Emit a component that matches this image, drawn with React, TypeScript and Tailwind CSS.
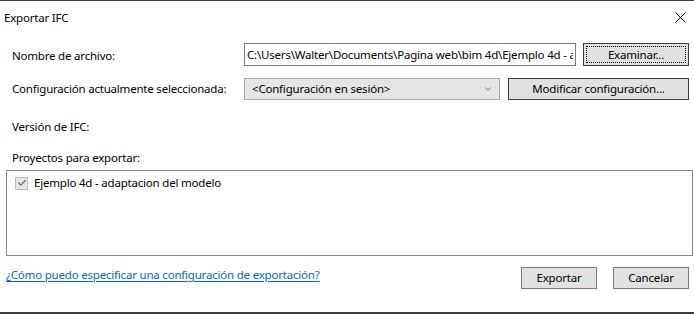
import { Check, ChevronDown } from 'lucide-react';

function WinButton({ label, width, focused = false, darkBorder = false }: { label: string; width: string; focused?: boolean; darkBorder?: boolean }) {
  return (
    <button
      className={`${width} h-full flex items-center justify-center bg-[#e1e1e1] border ${
        darkBorder ? 'border-[#3c3c3c]' : 'border-[#7a7a7a]'
      } text-black p-[2px]`}
    >
      <span
        className={`w-full h-full flex items-center justify-center ${
          focused ? 'border border-dotted border-black' : ''
        }`}
      >
        {label}
      </span>
    </button>
  );
}

export default function App() {
  return (
    <div
      className="w-[694px] h-[314px] bg-white border-t border-b-2 border-[#3f3f3f] text-black text-[11.5px] tracking-[-0.2px] flex flex-col overflow-hidden"
      style={{ fontFamily: '"Noto Sans", "Open Sans", sans-serif' }}
    >
      {/* Title bar */}
      <div className="h-[33px] flex items-center justify-between pl-[4px] pr-[8px] shrink-0">
        <span>Exportar IFC</span>
        <svg width="11" height="11" viewBox="0 0 11 11" className="text-black">
          <path d="M0.5 0.5 L10.5 10.5 M10.5 0.5 L0.5 10.5" stroke="currentColor" strokeWidth="1" fill="none" />
        </svg>
      </div>

      {/* File name */}
      <div className="mt-[9px] h-[23px] flex items-center pl-[12px] shrink-0">
        <span className="w-[232px] pt-[3px]">Nombre de archivo:</span>
        <div className="w-[332px] h-full border border-[#7a7a7a] flex items-center pl-[2px] overflow-hidden whitespace-nowrap">
          <span className="w-[326px] overflow-hidden">C:\Users\Walter\Documents\Pagina web\bim 4d\Ejemplo 4d - a</span>
        </div>
        <div className="ml-[7px] h-full">
          <WinButton label="Examinar..." width="w-[106px]" focused darkBorder />
        </div>
      </div>

      {/* Configuration */}
      <div className="mt-[12px] h-[22px] flex items-center pl-[12px] shrink-0">
        <span className="w-[232px]">Configuración actualmente seleccionada:</span>
        <div className="w-[256px] h-full border border-[#acacac] bg-[#e5e5e5] flex items-center justify-between pl-[7px] pr-[6px]">
          <span>&lt;Configuración en sesión&gt;</span>
          <ChevronDown className="w-[10px] h-[10px] text-[#555]" strokeWidth={2} />
        </div>
        <div className="ml-[8px] h-full">
          <WinButton label="Modificar configuración..." width="w-[181px]" darkBorder />
        </div>
      </div>

      {/* IFC version */}
      <div className="mt-[16px] h-[22px] flex items-center pl-[12px] shrink-0">
        <span>Versión de IFC:</span>
      </div>

      {/* Projects */}
      <div className="mt-[10px] h-[20px] flex items-center pl-[12px] shrink-0">
        <span>Proyectos para exportar:</span>
      </div>
      <div className="mt-[2px] ml-[6px] w-[687px] h-[86px] border border-[#828790] shrink-0 pt-[4px] pl-[8px]">
        <div className="flex items-center gap-[6px] h-[16px]">
          <span className="w-[13px] h-[13px] border border-[#bcbcbc] bg-[#e6e6e6] flex items-center justify-center">
            <Check className="w-[10px] h-[10px] text-[#6d6d6d]" strokeWidth={3} />
          </span>
          <span>Ejemplo 4d - adaptacion del modelo</span>
        </div>
      </div>

      {/* Footer */}
      <div className="mt-[9px] flex items-start pl-[6px] shrink-0">
        <a className="leading-[20px] text-[#0066cc] underline underline-offset-2 cursor-pointer">
          ¿Cómo puedo especificar una configuración de exportación?
        </a>
        <div className="ml-auto mr-[5px] mt-[2px] h-[22px] flex gap-[16px]">
          <WinButton label="Exportar" width="w-[76px]" />
          <WinButton label="Cancelar" width="w-[76px]" />
        </div>
      </div>
    </div>
  );
}
